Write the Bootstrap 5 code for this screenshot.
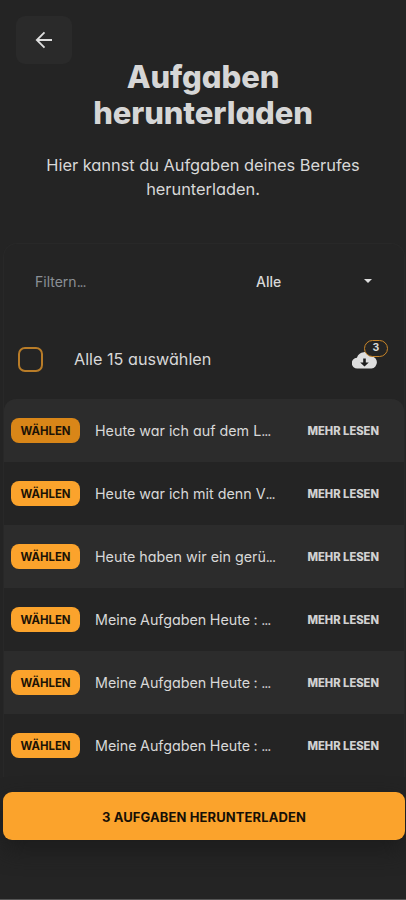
<!DOCTYPE html>
<html lang="de" data-bs-theme="dark">
<head>
<meta charset="utf-8">
<meta name="viewport" content="width=device-width, initial-scale=1">
<title>Aufgaben herunterladen</title>
<link href="https://cdn.jsdelivr.net/npm/bootstrap@5.3.0/dist/css/bootstrap.min.css" rel="stylesheet">
<style>
  body { background: #242424; color: #d8d8d8; font-family: Inter, "Open Sans", sans-serif; font-feature-settings: "cv11"; height: 900px; overflow: hidden; border-bottom: 1px solid #555; }
  .back-btn { width: 56px; height: 48px; margin: 16px 0 0 16px; background: #2a2a2a; border-radius: 9px; color: #dedede; }
  .page-title { font-size: 31px; line-height: 36px; font-weight: 800; margin-top: -5px; letter-spacing: -.1px; color: #d6d6d6; }
  .intro { font-size: 16.4px; line-height: 24px; margin-top: 22px; letter-spacing: -.02px; }
  .task-panel { margin: 42px 1px 0 3px; border: 1px solid #282828; border-bottom: 0; border-radius: 14px 14px 0 0; }
  .filter-row { height: 74px; font-size: 14px; padding: 0 32px 0 31px; }
  .filter-name { width: 221px; color: #8b9096; }
  .all-row { height: 81px; padding: 1px 16px 0 14px; }
  .all-check { width: 25px; height: 25px; border: 2px solid #b87c28; border-radius: 7px; background: transparent; }
  .all-label { font-size: 16.2px; margin-left: 31px; letter-spacing: 0; }
  .cloud { width: 36px; height: 36px; margin-top: -7px; }
  .count-pill { top: 2px; left: 12px; width: 24px; height: 17px; border: 1.5px solid #c88528; border-radius: 9px; font-size: 10.5px; line-height: 14px; font-weight: 700; background: #242424; }
  .task-row { height: 63px; padding: 0 25px 0 7px; }
  .task-row:nth-child(odd) { background: #2c2c2c; }
  .task-row:first-child { border-radius: 12px 12px 0 0; }
  .pick-btn { width: 69px; height: 25px; border-radius: 8px; background: #fba32c; color: #1c1306; font-size: 11.4px; line-height: 26px; font-weight: 700; }
  .pick-btn.is-held { background: #d98618; }
  .task-text { font-size: 14.3px; margin-left: 15px; white-space: nowrap; }
  .task-text.is-spaced { word-spacing: -.5px; }
  .dots { letter-spacing: -1.1px; }
  .more-link { font-size: 11.2px; font-weight: 800; white-space: nowrap; color: #d2d2d2; padding-top: 1px; }
  .download-btn { height: 48px; margin: 15px 1px 0 3px; border-radius: 9px; background: #fba32c; color: #171006; font-size: 13px; line-height: 50px; letter-spacing: .1px; font-weight: 700; box-shadow: 0 10px 22px #1c1c1c; }
</style>
<script src="https://cdn.jsdelivr.net/npm/bootstrap@5.3.0/dist/js/bootstrap.bundle.min.js"></script>
</head>
<body class="d-flex flex-column">
  <button class="back-btn btn border-0 p-0 d-flex align-items-center justify-content-center flex-shrink-0" aria-label="Zurück">
    <svg width="18" height="18" viewBox="0 0 18 18" fill="none" stroke="currentColor" stroke-width="1.8"><path d="M17 9H2M9.500 1.300 1.800 9l7.700 7.700"/></svg>
  </button>
  <header class="text-center">
    <h1 class="page-title mb-0">Aufgaben<br>herunterladen</h1>
    <p class="intro mb-0">Hier kannst du Aufgaben deines Berufes<br>herunterladen.</p>
  </header>
  <main class="task-panel">
    <div class="filter-row d-flex align-items-center">
      <span class="filter-name">Filtern<span class="dots">...</span></span>
      <span class="fw-medium">Alle</span>
      <svg class="ms-auto" width="8" height="4" viewBox="0 0 8 4" fill="#dedede"><path d="M0 0h8L4 4z"/></svg>
    </div>
    <div class="all-row d-flex align-items-center">
      <span class="all-check"></span>
      <span class="all-label">Alle 15 auswählen</span>
      <span class="cloud position-relative ms-auto">
        <svg class="d-block" width="36" height="36" viewBox="0 0 36 36"><path d="M5.500 30.500a5.400 5.400 0 0 1-.6-10.800A8 8 0 0 1 19.500 18.200 6.200 6.200 0 0 1 19.500 30.500z" fill="#dedede"/><path d="M11.200 20.500h2.600v4h3L12.500 28.500 8.200 24.500h3z" fill="#1d1d1d"/></svg>
        <span class="count-pill position-absolute text-center">3</span>
      </span>
    </div>
    <div>
      <div class="task-row d-flex align-items-center"><button class="pick-btn is-held btn border-0 p-0">WÄHLEN</button><span class="task-text">Heute war ich auf dem L<span class="dots">...</span></span><a class="more-link text-decoration-none ms-auto">MEHR LESEN</a></div>
      <div class="task-row d-flex align-items-center"><button class="pick-btn btn border-0 p-0">WÄHLEN</button><span class="task-text">Heute war ich mit denn V<span class="dots">...</span></span><a class="more-link text-decoration-none ms-auto">MEHR LESEN</a></div>
      <div class="task-row d-flex align-items-center"><button class="pick-btn btn border-0 p-0">WÄHLEN</button><span class="task-text">Heute haben wir ein gerü<span class="dots">...</span></span><a class="more-link text-decoration-none ms-auto">MEHR LESEN</a></div>
      <div class="task-row d-flex align-items-center"><button class="pick-btn btn border-0 p-0">WÄHLEN</button><span class="task-text is-spaced">Meine Aufgaben Heute : <span class="dots">...</span></span><a class="more-link text-decoration-none ms-auto">MEHR LESEN</a></div>
      <div class="task-row d-flex align-items-center"><button class="pick-btn btn border-0 p-0">WÄHLEN</button><span class="task-text is-spaced">Meine Aufgaben Heute : <span class="dots">...</span></span><a class="more-link text-decoration-none ms-auto">MEHR LESEN</a></div>
      <div class="task-row d-flex align-items-center"><button class="pick-btn btn border-0 p-0">WÄHLEN</button><span class="task-text is-spaced">Meine Aufgaben Heute : <span class="dots">...</span></span><a class="more-link text-decoration-none ms-auto">MEHR LESEN</a></div>
    </div>
  </main>
  <button class="download-btn btn border-0 p-0 flex-shrink-0">3 AUFGABEN HERUNTERLADEN</button>
</body>
</html>
